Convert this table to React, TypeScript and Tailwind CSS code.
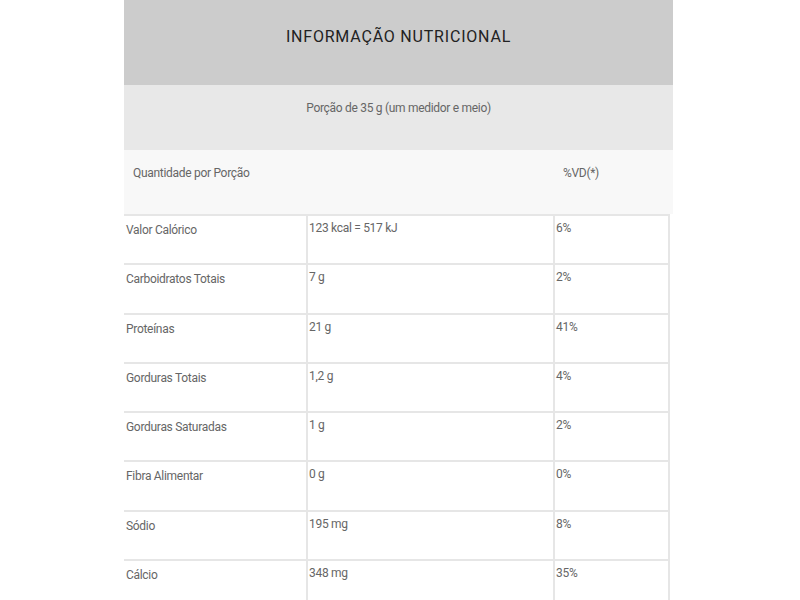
const rows: [string, string, string][] = [
  ['Valor Calórico', '123 kcal = 517 kJ', '6%'],
  ['Carboidratos Totais', '7 g', '2%'],
  ['Proteínas', '21 g', '41%'],
  ['Gorduras Totais', '1,2 g', '4%'],
  ['Gorduras Saturadas', '1 g', '2%'],
  ['Fibra Alimentar', '0 g', '0%'],
  ['Sódio', '195 mg', '8%'],
  ['Cálcio', '348 mg', '35%'],
];

export default function App() {
  return (
    <div className="min-h-screen bg-white font-['Roboto',sans-serif]">
      <div className="ml-[124px] w-[549px]">
        <div className="h-[85px] bg-[#cccccc] flex justify-center pt-[27px]">
          <h2 className="text-[16px] tracking-[0.8px] text-[#222] font-normal leading-5">
            INFORMAÇÃO NUTRICIONAL
          </h2>
        </div>

        <div className="h-[65px] bg-[#e8e8e8] flex justify-center pt-[15px]">
          <p className="text-[12px] tracking-[-0.3px] text-[#666] leading-4">
            Porção de 35 g (um medidor e meio)
          </p>
        </div>

        <div className="h-[64px] bg-[#f8f8f8] flex pt-[15px] text-[12px] tracking-[-0.3px] text-[#666] leading-4">
          <span className="w-[439px] pl-[9px]">Quantidade por Porção</span>
          <span>%VD(*)</span>
        </div>

        <div className="w-[546px] border-r-2 border-[#e6e6e6] text-[12px] tracking-[-0.3px] text-[#666] leading-4">
          {rows.map(([name, amount, vd]) => (
            <div key={name} className="h-[49.3px] flex border-t-2 border-[#e6e6e6]">
              <div className="w-[182px] pl-[2px] pt-[6px]">{name}</div>
              <div className="w-[247px] border-l-2 border-[#e6e6e6] pl-[1px] pt-[4px]">{amount}</div>
              <div className="flex-1 border-l-2 border-[#e6e6e6] pl-[1px] pt-[4px]">{vd}</div>
            </div>
          ))}
        </div>
      </div>
    </div>
  );
}
